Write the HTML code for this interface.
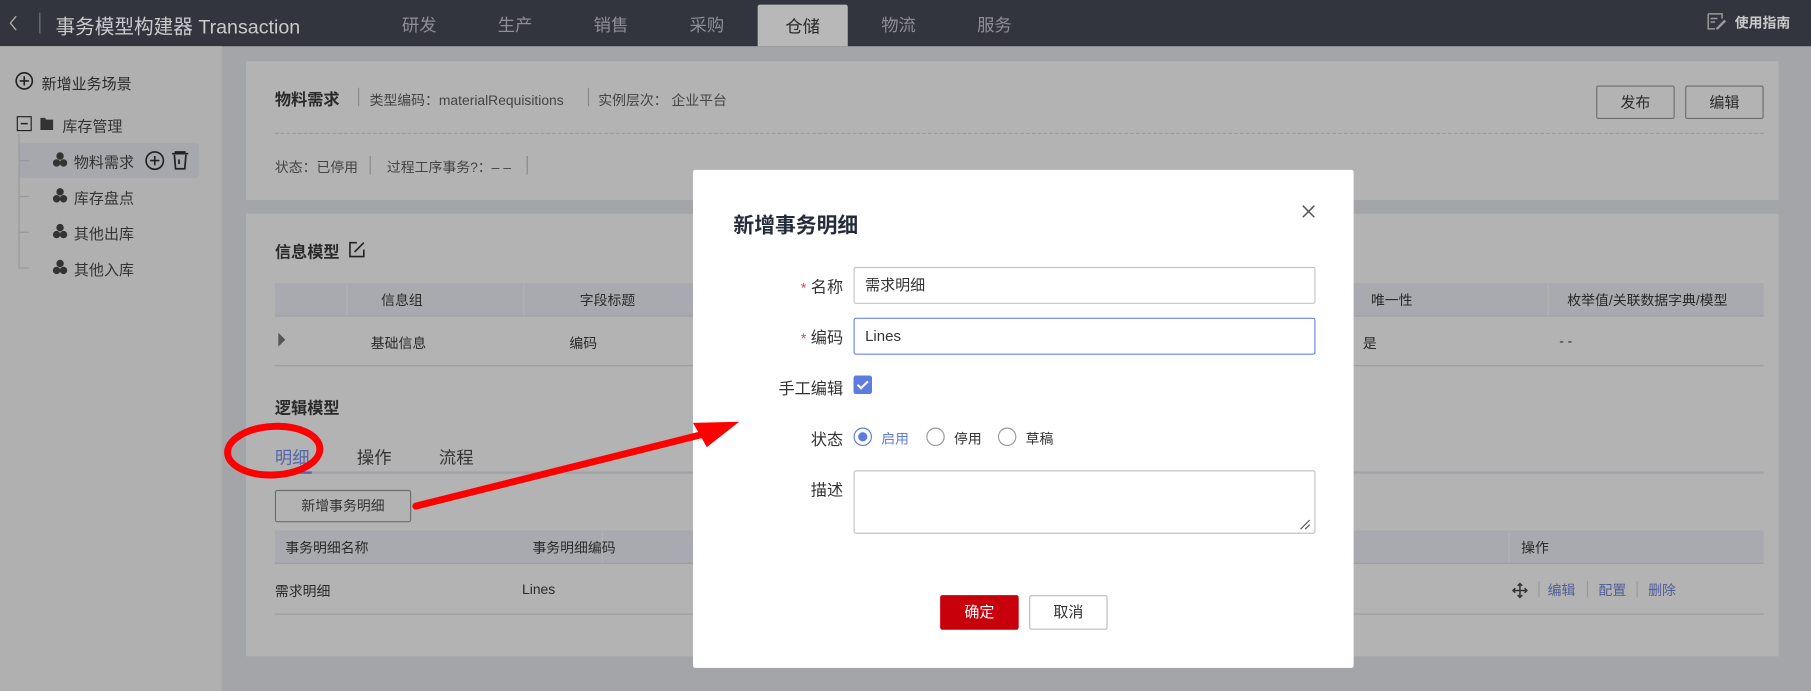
<!DOCTYPE html>
<html><head><meta charset="utf-8"><style>
*{margin:0;padding:0;box-sizing:border-box}
html,body{width:1811px;height:691px;overflow:hidden;background:#a4a5a9}
#w{position:absolute;left:0;top:0;width:1568px;height:598px;transform:scale(1.15497,1.1555);transform-origin:0 0;font-family:"Liberation Sans","Noto Sans CJK SC",sans-serif;color:#2a2a2a;font-size:12px;background:#a4a5a9}
.a{position:absolute;white-space:nowrap}
.hdr{left:0;top:0;width:1568px;height:40px;background:#32353d}
.tab{top:0;height:40px;line-height:46px;font-size:15px;color:#8d8f94;width:78px;text-align:center}
.card{background:#b3b3b3}
.th{background:#a9aab0}
.ln{background:#9c9da2;height:1px}
.btn{border:1px solid #6e6e6e;border-radius:2px;text-align:center}
.lbl{font-size:14px;color:#333;text-align:right;width:100px}
.inp{border:1px solid #c4c4c4;border-radius:2px;background:#fff;font-size:13px;color:#333;padding-left:9px}
</style></head><body><div id="w">
<div class="a hdr"></div>
<svg class="a" style="left:8px;top:13px" width="8" height="14"><path d="M6 1L1 7l5 6" stroke="#aaa" stroke-width="1.2" fill="none"/></svg>
<div class="a" style="left:34px;top:11px;width:1px;height:18px;background:#777"></div>
<div class="a" style="left:48px;top:9px;color:#c9cacc;font-size:17px">事务模型构建器 Transaction</div>
<div class="a tab" style="left:324px">研发</div>
<div class="a tab" style="left:407px">生产</div>
<div class="a tab" style="left:490px">销售</div>
<div class="a tab" style="left:573px">采购</div>
<div class="a tab" style="left:656px;top:4px;height:36px;line-height:40px;background:#b8b8b8;color:#2a2a2a;border-radius:2px 2px 0 0">仓储</div>
<div class="a tab" style="left:739px">物流</div>
<div class="a tab" style="left:822px">服务</div>
<svg class="a" style="left:1478px;top:11px" width="17" height="15" viewBox="0 0 17 15"><path d="M1 1h12v4M1 1v13h6M3 5h6M3 8h4" stroke="#999" stroke-width="1.3" fill="none"/><path d="M8 13l7-7 1.5 1.5-7 7H8z" fill="#999"/></svg>
<div class="a" style="left:1502px;top:11px;color:#c9cacc;font-size:12px;font-weight:bold">使用指南</div>

<div class="a" style="left:0;top:40px;width:192px;height:558px;background:#b0b0b0"></div>
<svg class="a" style="left:13px;top:62px" width="16" height="16"><circle cx="8" cy="8" r="7" stroke="#222" stroke-width="1.4" fill="none"/><path d="M8 4v8M4 8h8" stroke="#222" stroke-width="1.4"/></svg>
<div class="a" style="left:36px;top:62px;font-size:13px">新增业务场景</div>
<svg class="a" style="left:14px;top:100px" width="36" height="14"><rect x="1" y="1" width="12" height="12" fill="none" stroke="#222"/><path d="M4 7h6" stroke="#222" stroke-width="1.3"/><path d="M21 2h4l1 1.5h6v9H21z" fill="#333"/></svg>
<div class="a" style="left:54px;top:99px;font-size:13px;color:#333">库存管理</div>
<div class="a" style="left:16px;top:116px;width:1px;height:117px;border-left:1px solid #999"></div>
<div class="a" style="left:17px;top:124px;width:155px;height:30px;background:#a6a8ae;border-radius:2px"></div>
<svg class="a" style="left:124px;top:129px" width="44" height="20"><circle cx="10" cy="10" r="7.5" stroke="#222" stroke-width="1.4" fill="none"/><path d="M10 6v8M6 10h8" stroke="#222" stroke-width="1.4"/><path d="M25 4h14M28 4v-1.5h8V4M27 5l1 12h8l1-12M31 9v4" stroke="#222" stroke-width="1.5" fill="none"/></svg>
<div class="a" style="left:64px;top:130px;font-size:13px;color:#333">物料需求</div>
<div class="a" style="left:64px;top:161px;font-size:13px;color:#333">库存盘点</div>
<div class="a" style="left:64px;top:192px;font-size:13px;color:#333">其他出库</div>
<div class="a" style="left:64px;top:223px;font-size:13px;color:#333">其他入库</div>
<svg class="a" style="left:16px;top:130px" width="50" height="110"><g fill="#333"><circle cx="36" cy="5" r="3.2"/><circle cx="33" cy="11" r="3.2"/><circle cx="39" cy="11" r="3.2"/><circle cx="36" cy="36" r="3.2"/><circle cx="33" cy="42" r="3.2"/><circle cx="39" cy="42" r="3.2"/><circle cx="36" cy="67" r="3.2"/><circle cx="33" cy="73" r="3.2"/><circle cx="39" cy="73" r="3.2"/><circle cx="36" cy="98" r="3.2"/><circle cx="33" cy="104" r="3.2"/><circle cx="39" cy="104" r="3.2"/></g><path d="M1 9h8M1 40h8M1 71h8M1 102h8" stroke="#999"/></svg>

<div class="a card" style="left:213px;top:53px;width:1327px;height:120px"></div>
<div class="a" style="left:238px;top:76px;font-size:14px;font-weight:bold">物料需求</div>
<div class="a" style="left:320px;top:78px;color:#444">类型编码：materialRequisitions</div>
<div class="a" style="left:310px;top:76px;width:1px;height:16px;background:#888"></div>
<div class="a" style="left:509px;top:76px;width:1px;height:16px;background:#888"></div>
<div class="a" style="left:518px;top:78px;color:#444">实例层次：&nbsp;企业平台</div>
<div class="a btn" style="left:1382px;top:74px;width:68px;height:29px;line-height:27px;font-size:13px">发布</div>
<div class="a btn" style="left:1459px;top:74px;width:68px;height:29px;line-height:27px;font-size:13px">编辑</div>
<div class="a" style="left:238px;top:115px;width:1289px;border-top:1px dashed #999"></div>
<div class="a" style="left:238px;top:136px;color:#444">状态：已停用</div>
<div class="a" style="left:320px;top:135px;width:1px;height:16px;background:#888"></div>
<div class="a" style="left:335px;top:136px;color:#444">过程工序事务?：– –</div>
<div class="a" style="left:456px;top:135px;width:1px;height:16px;background:#888"></div>

<div class="a card" style="left:213px;top:185px;width:1327px;height:383px"></div>
<div class="a" style="left:238px;top:208px;font-size:14px;font-weight:bold">信息模型</div>
<svg class="a" style="left:302px;top:209px" width="14" height="14"><path d="M7 1H1v12h12V7M5 9l8-8" stroke="#222" stroke-width="1.4" fill="none"/></svg>
<div class="a th" style="left:238px;top:245px;width:1289px;height:28px"></div>
<div class="a" style="left:300px;top:245px;width:1px;height:28px;background:#b3b3b3"></div>
<div class="a" style="left:453px;top:245px;width:1px;height:28px;background:#b3b3b3"></div>
<div class="a" style="left:1170px;top:245px;width:1px;height:28px;background:#b3b3b3"></div>
<div class="a" style="left:1340px;top:245px;width:1px;height:28px;background:#b3b3b3"></div>
<div class="a" style="left:330px;top:251px">信息组</div>
<div class="a" style="left:502px;top:251px">字段标题</div>
<div class="a" style="left:1187px;top:251px">唯一性</div>
<div class="a" style="left:1357px;top:251px">枚举值/关联数据字典/模型</div>
<div class="a ln" style="left:238px;top:273px;width:1289px"></div>
<svg class="a" style="left:240px;top:288px" width="8" height="12"><path d="M1 0l6 6-6 6z" fill="#555"/></svg>
<div class="a" style="left:321px;top:288px">基础信息</div>
<div class="a" style="left:493px;top:288px">编码</div>
<div class="a" style="left:1180px;top:288px">是</div>
<div class="a" style="left:1350px;top:288px">- -</div>
<div class="a ln" style="left:238px;top:316px;width:1289px"></div>

<div class="a" style="left:238px;top:343px;font-size:14px;font-weight:bold">逻辑模型</div>
<div class="a" style="left:238px;top:385px;font-size:15px;color:#5566aa">明细</div>
<div class="a" style="left:309px;top:385px;font-size:15px;color:#333">操作</div>
<div class="a" style="left:380px;top:385px;font-size:15px;color:#333">流程</div>
<div class="a" style="left:238px;top:408px;width:1289px;height:2px;background:#a2a3a8"></div>
<div class="a" style="left:238px;top:408px;width:32px;height:2px;background:#5566aa"></div>
<div class="a btn" style="left:238px;top:424px;width:118px;height:28px;line-height:26px;color:#333">新增事务明细</div>
<div class="a th" style="left:238px;top:459px;width:1289px;height:28px"></div>
<div class="a" style="left:521px;top:459px;width:1px;height:28px;background:#b3b3b3"></div>
<div class="a" style="left:1306px;top:459px;width:1px;height:28px;background:#b3b3b3"></div>
<div class="a" style="left:247px;top:465px">事务明细名称</div>
<div class="a" style="left:461px;top:465px">事务明细编码</div>
<div class="a" style="left:1317px;top:465px">操作</div>
<div class="a ln" style="left:238px;top:487px;width:1289px"></div>
<div class="a" style="left:238px;top:503px">需求明细</div>
<div class="a" style="left:452px;top:503px">Lines</div>
<svg class="a" style="left:1309px;top:504px" width="14" height="14"><path d="M7 1v12M1 7h12M5 3l2-2 2 2M5 11l2 2 2-2M3 5l-2 2 2 2M11 5l2 2-2 2" stroke="#333" stroke-width="1.3" fill="none"/></svg>
<div class="a" style="left:1332px;top:503px;width:1px;height:14px;background:#999"></div>
<div class="a" style="left:1340px;top:502px;color:#4f5d99">编辑</div>
<div class="a" style="left:1374px;top:503px;width:1px;height:14px;background:#999"></div>
<div class="a" style="left:1384px;top:502px;color:#4f5d99">配置</div>
<div class="a" style="left:1417px;top:503px;width:1px;height:14px;background:#999"></div>
<div class="a" style="left:1427px;top:502px;color:#4f5d99">删除</div>
<div class="a ln" style="left:238px;top:531px;width:1289px"></div>

<div class="a" style="left:600px;top:147px;width:572px;height:431px;background:#fff;border-radius:2px"></div>
<div class="a" style="left:635px;top:181px;font-size:18px;font-weight:bold;color:#252b3a">新增事务明细</div>
<svg class="a" style="left:1127px;top:177px" width="12" height="12"><path d="M1 1l10 10M11 1L1 11" stroke="#555" stroke-width="1.3"/></svg>
<div class="a lbl" style="left:630px;top:238px"><span style="color:#e84040;font-size:12px">*</span> 名称</div>
<div class="a inp" style="left:739px;top:231px;width:400px;height:32px;line-height:30px">需求明细</div>
<div class="a lbl" style="left:630px;top:282px"><span style="color:#e84040;font-size:12px">*</span> 编码</div>
<div class="a inp" style="left:739px;top:275px;width:400px;height:32px;line-height:30px;border-color:#6a85e8">Lines</div>
<div class="a lbl" style="left:630px;top:326px">手工编辑</div>
<div class="a" style="left:739px;top:325px;width:16px;height:16px;background:#5e7ce0;border-radius:2px"></div>
<svg class="a" style="left:739px;top:325px" width="16" height="16"><path d="M3.5 8l3 3 6-6" stroke="#fff" stroke-width="1.8" fill="none"/></svg>
<div class="a lbl" style="left:630px;top:370px">状态</div>
<svg class="a" style="left:739px;top:369px" width="180" height="18"><circle cx="8" cy="9" r="7.5" fill="none" stroke="#5e7ce0"/><circle cx="8" cy="9" r="4" fill="#5e7ce0"/><circle cx="71" cy="9" r="7.5" fill="none" stroke="#999"/><circle cx="133" cy="9" r="7.5" fill="none" stroke="#999"/></svg>
<div class="a" style="left:763px;top:371px;color:#5e7ce0">启用</div>
<div class="a" style="left:826px;top:371px;color:#333">停用</div>
<div class="a" style="left:888px;top:371px;color:#333">草稿</div>
<div class="a lbl" style="left:630px;top:414px">描述</div>
<div class="a inp" style="left:739px;top:407px;width:400px;height:55px"></div>
<svg class="a" style="left:1125px;top:449px" width="10" height="10"><path d="M1 9l8-8M5 9l4-4" stroke="#555"/></svg>
<div class="a" style="left:814px;top:515px;width:68px;height:30px;line-height:30px;background:#c7000b;color:#fff;text-align:center;border-radius:2px;font-size:13px">确定</div>
<div class="a" style="left:891px;top:515px;width:68px;height:30px;line-height:28px;border:1px solid #bbb;color:#333;text-align:center;border-radius:2px;font-size:13px">取消</div>

<svg class="a" style="left:0;top:0" width="1568" height="598"><ellipse cx="237" cy="390" rx="40" ry="21" fill="none" stroke="#f00" stroke-width="6" transform="rotate(-3 237 390)"/><path d="M360 438L612 375" stroke="#f00" stroke-width="6" stroke-linecap="round"/><path d="M600 366L640 365 612 387z" fill="#f00"/></svg>
</div></body></html>
